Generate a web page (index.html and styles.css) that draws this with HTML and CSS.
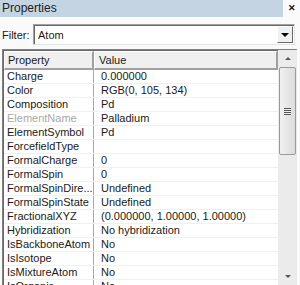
FILE: index.html
```html
<!DOCTYPE html>
<html lang="en">
<head>
  <meta charset="UTF-8">
  <title>Properties</title>
  <link rel="stylesheet" href="styles.css">
</head>
<body>
  <div class="panel">
    <div class="titlebar">
      <div class="caption">Properties</div>
      <div class="close">&#x2715;</div>
    </div>

    <div class="filter">
      <label>Filter:</label>
      <div class="combo">
        <span class="combo-text">Atom</span>
        <span class="combo-btn"><span class="tri-down"></span></span>
      </div>
    </div>

    <div class="grid">
      <div class="table">
        <div class="head">
          <div class="hcell c1">Property</div>
          <div class="hcell c2">Value</div>
        </div>
        <div class="row"><div class="c1">Charge</div><div class="c2">0.000000</div></div>
        <div class="row"><div class="c1">Color</div><div class="c2">RGB(0, 105, 134)</div></div>
        <div class="row"><div class="c1">Composition</div><div class="c2">Pd</div></div>
        <div class="row"><div class="c1 dim">ElementName</div><div class="c2">Palladium</div></div>
        <div class="row"><div class="c1">ElementSymbol</div><div class="c2">Pd</div></div>
        <div class="row"><div class="c1">ForcefieldType</div><div class="c2"></div></div>
        <div class="row"><div class="c1">FormalCharge</div><div class="c2">0</div></div>
        <div class="row"><div class="c1">FormalSpin</div><div class="c2">0</div></div>
        <div class="row"><div class="c1">FormalSpinDire...</div><div class="c2">Undefined</div></div>
        <div class="row"><div class="c1">FormalSpinState</div><div class="c2">Undefined</div></div>
        <div class="row"><div class="c1">FractionalXYZ</div><div class="c2">(0.000000, 1.00000, 1.00000)</div></div>
        <div class="row"><div class="c1">Hybridization</div><div class="c2">No hybridization</div></div>
        <div class="row"><div class="c1">IsBackboneAtom</div><div class="c2">No</div></div>
        <div class="row"><div class="c1">IsIsotope</div><div class="c2">No</div></div>
        <div class="row"><div class="c1">IsMixtureAtom</div><div class="c2">No</div></div>
        <div class="row"><div class="c1">IsOrganic</div><div class="c2">No</div></div>
      </div>
      <div class="scrollbar">
        <div class="sb-btn"><span class="tri-up"></span></div>
        <div class="thumb"><span class="grip"></span></div>
        <div class="track"></div>
        <div class="sb-btn"><span class="tri-down small"></span></div>
      </div>
    </div>
  </div>
</body>
</html>
```

FILE: styles.css
```css
* { box-sizing: border-box; margin: 0; padding: 0; }
body {
  width: 300px; height: 285px; overflow: hidden;
  background: #fafafa;
  font-family: "Liberation Sans", Arial, sans-serif;
  font-size: 11px; color: #1a1a1a;
}
.panel { height: 285px; display: flex; flex-direction: column; }

.titlebar { display: flex; height: 17px; }
.caption {
  flex: 1; background: #c5d4e2; padding-left: 2px;
  font-size: 12px; line-height: 17px; color: #222;
}
.close {
  width: 17px; text-align: center; font-size: 9px; font-weight: 700;
  line-height: 17px; color: #111;
}

.filter { display: flex; align-items: center; margin-top: 7px; padding: 0 5px 0 2px; }
.filter label { width: 31px; font-size: 11px; }
.combo {
  flex: 1; height: 21px; display: flex; align-items: center;
  background: #fff; border: 1px solid #a0a0a0; border-right-color: #e3e3e3; border-bottom-color: #e3e3e3;
  box-shadow: inset 1px 1px 0 #696969;
}
.combo-text { flex: 1; padding-left: 4px; }
.combo-btn {
  width: 16px; height: 17px; margin-right: 1px;
  background: #f0f0f0; border: 1px solid #fff; border-right-color: #696969; border-bottom-color: #696969;
  display: flex; align-items: center; justify-content: center;
}
.tri-down { width: 0; height: 0; border-left: 4px solid transparent; border-right: 4px solid transparent; border-top: 4px solid #000; }
.tri-down.small { border-left-width: 3px; border-right-width: 3px; border-top: 3px solid #555; }
.tri-up { width: 0; height: 0; border-left: 3px solid transparent; border-right: 3px solid transparent; border-bottom: 3px solid #555; }

.grid {
  flex: 1; display: flex; margin: 4px 3px 0 2px; min-height: 0;
  border-left: 1px solid #808080; border-top: 1px solid #808080;
}
.table { flex: 1; overflow: hidden; border-top: 1px solid #696969; border-left: 1px solid #696969; }
.head { display: flex; height: 19px; }
.hcell {
  background: #f0f0f0; border-right: 2px solid #a0a0a0; border-bottom: 2px solid #a0a0a0;
  border-top: 1px solid #fff; border-left: 1px solid #fff;
  line-height: 16px; padding-left: 3px;
}
.head .c2 { flex: 1; padding-left: 4px; }
.row { display: flex; height: 14px; border-bottom: 1px solid #f0f0f0; line-height: 13px; background: #fff; }
.c1 { width: 90px; padding-left: 3px; white-space: nowrap; overflow: hidden; }
.row .c1 { border-right: 1px solid #a8a8a8; }
.c2 { flex: 1; padding-left: 7px; white-space: nowrap; overflow: hidden; }
.dim { color: #a8a8a8; }

.scrollbar { width: 19px; display: flex; flex-direction: column; background: #ebebeb; }
.sb-btn { height: 17px; display: flex; align-items: center; justify-content: center; }
.thumb {
  height: 88px; margin: 0 1px; border: 1px solid #9a9a9a; border-radius: 2px;
  background: linear-gradient(to right, #f1f1f1, #dcdcdc);
  display: flex; align-items: center; justify-content: center;
}
.grip {
  width: 7px; height: 7px;
  background: repeating-linear-gradient(to bottom, #555 0 1px, #eee 1px 2px);
}
.track { flex: 1; }
```
